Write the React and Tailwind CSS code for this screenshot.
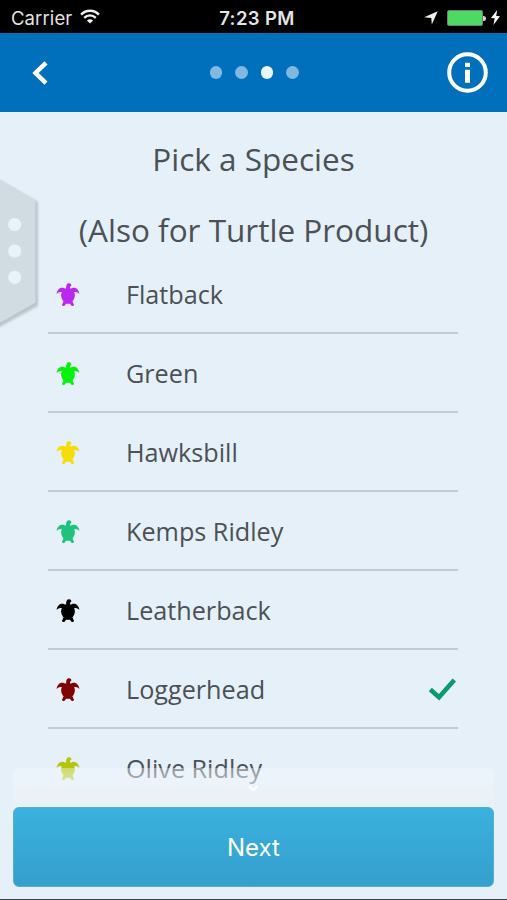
const SPECIES = [
  { name: 'Flatback', color: '#bb29f0' },
  { name: 'Green', color: '#05f20a' },
  { name: 'Hawksbill', color: '#f6dc08' },
  { name: 'Kemps Ridley', color: '#20c27a' },
  { name: 'Leatherback', color: '#000000' },
  { name: 'Loggerhead', color: '#800303', selected: true },
  { name: 'Olive Ridley', color: '#b5c60a' },
];

function Turtle({ color }) {
  return (
    <svg width="24" height="24" viewBox="0 0 24 24" fill={color}>
      <ellipse cx="12" cy="12.600" rx="6.900" ry="7.600" />
      <path d="M10.300 6.500C9.700 3 10.500.6 12.600.3c1.800-.2 3 .8 2.700 2.300-.2.900-1.300.8-1.300 1.700v2.200Z" />
      <path d="M6.500 18.800 9.500 18.500h5l3 .3c-1 .8-.4 1.500.4 2.400.4 1.100-.6 1.900-1.700 1.800-1.300-.1-1.300-1.500-2.200-2.300h-4c-.9.8-.9 2.200-2.200 2.300-1.100.1-2.100-.7-1.700-1.800.8-.9 1.400-1.600.4-2.400Z" />
      <path d="M9.300 8.200C6.200 7 3.500 8.300 2 11" fill="none" stroke={color} strokeWidth="0" />
      <path d="M10 6.500C7.500 3.400 1.300 4.300.6 11.100c1.500-1.900 3.500-2.500 6-1.700ZM14 6.500c2.500-3.100 8.700-2.200 9.400 4.600-1.500-1.900-3.500-2.500-6-1.700Z" />
    </svg>
  );
}

function StatusBar() {
  return (
    <div className="relative flex h-[33px] items-center bg-black pl-[11px] pr-[7px] font-['Inter',sans-serif] text-[#e4e4e4]">
      <span className="pt-[3px] text-[18.5px] leading-none tracking-[0.1px]">Carrier</span>
      <svg className="ml-[8px]" width="20" height="15" viewBox="0 0 20 15" fill="none" stroke="#f1f1f1">
        <path d="M1.100 5.600C6.200.5 13.800.5 18.900 5.600" strokeWidth="2.500" />
        <path d="M4.200 8.800c3.400-3.300 8.200-3.300 11.600 0" strokeWidth="2.400" />
        <path d="M10 14.500 6.900 11.500c1.800-1.800 4.400-1.800 6.200 0Z" fill="#f1f1f1" stroke="none" />
      </svg>
      <span className="absolute inset-x-0 top-[8px] pl-[7px] text-center text-[18.5px] font-semibold leading-[20px] tracking-[0.4px]">7:23 PM</span>
      <div className="ml-auto flex items-center">
        <svg className="mt-[3px]" width="14" height="14" viewBox="0 0 14 14" fill="#f1f1f1"><path d="M13.700.3 7.800 13.600 7.300 6.900.2 6.200Z" /></svg>
        <div className="ml-[9px] mt-[3px] h-[16px] w-[36px] rounded-[2px] border border-[#6e7d70] bg-[#4cd964]" />
        <div className="mt-[3px] h-[5px] w-[3px] rounded-r-sm bg-[#d0d2d0]" />
        <svg className="ml-[5px] mt-[2px]" width="9" height="15" viewBox="0 0 9 15" fill="#fff"><path d="M6.200 0 0 8.100l3.700.2L2.400 15 9 6.200l-3.800-.1Z" /></svg>
      </div>
    </div>
  );
}

function Header() {
  return (
    <header className="flex h-[79px] items-center justify-between bg-[#006fbc] pl-[32px] pr-[19px]">
      <svg width="16" height="24" viewBox="0 0 16 24" fill="none" stroke="#fff" strokeWidth="4.500">
        <path d="M14 1.800 3.500 12 14 22.200" />
      </svg>
      <div className="ml-[13px] flex gap-[13px]">
        <i className="size-[12.500px] rounded-full bg-[#80b8df]" />
        <i className="size-[12.500px] rounded-full bg-[#80b8df]" />
        <i className="size-[12.500px] rounded-full bg-[#e9f4fb]" />
        <i className="size-[12.500px] rounded-full bg-[#80b8df]" />
      </div>
      <svg width="41" height="41" viewBox="0 0 41 41" fill="none">
        <circle cx="20.500" cy="20.500" r="18.300" stroke="#fff" strokeWidth="4" />
        <path d="M18 10.700h5v4.200h-5ZM18 17.800h5v13h-5Z" fill="#fff" />
      </svg>
    </header>
  );
}

function SideHandle() {
  return (
    <svg className="absolute left-0 top-[178px]" width="44" height="154" viewBox="0 0 44 154">
      <path d="M-4 0 38 24V128L-4 151Z" fill="#bac5cb" style={{ filter: 'blur(1.2px)' }} />
      <path d="M-4 0 35.500 22.500V124.500L-4 147Z" fill="#d1dbe2" />
      <circle cx="14.700" cy="46.500" r="6.600" fill="#e7f2fb" />
      <circle cx="14.700" cy="73" r="6.600" fill="#e7f2fb" />
      <circle cx="14.700" cy="99.300" r="6.600" fill="#e7f2fb" />
    </svg>
  );
}

export default function App() {
  return (
    <div className="relative flex h-[900px] w-[507px] flex-col overflow-hidden bg-[#e6f0f9] font-['Open_Sans',sans-serif] text-[#4b5154]">
      <StatusBar />
      <Header />
      <main className="min-h-0 flex-1 overflow-hidden pt-[11px]">
        <div className="text-center text-[31.500px] leading-[71px]">
          <h1 className="h-[71px]">Pick a Species</h1>
          <h2 className="h-[61px]">(Also for Turtle Product)</h2>
        </div>
        <ul className="ml-[48px] w-[410px]">
          {SPECIES.map((s) => (
            <li key={s.name} className="flex h-[79px] items-center border-b-2 border-[#c3ccd1] pl-[8px] pr-[1px] pt-[2px]">
              <Turtle color={s.color} />
              <span className="ml-[46px] text-[25.200px]">{s.name}</span>
              {s.selected && (
                <svg className="ml-auto" width="29" height="24" viewBox="0 0 29 24" fill="none" stroke="#0b9970" strokeWidth="4.600">
                  <path d="M2.300 11.500 11 19.300 26.300 2" />
                </svg>
              )}
            </li>
          ))}
        </ul>
      </main>
      <SideHandle />
      <footer className="absolute inset-x-[13px] bottom-0 flex h-[132px] flex-col">
        <div className="flex h-[39px] justify-center rounded-t-[5px] bg-gradient-to-b from-[#f6faff]/40 via-[#f0f6fb]/60 via-40% to-[#e8f1f6] pt-[17px]">
          <svg width="12" height="8" viewBox="0 0 12 8" fill="none" stroke="#fff" strokeWidth="2"><path d="m1 1 4.300 4.300L9.600 1" /></svg>
        </div>
        <button className="h-[80px] rounded-[6px] border border-[#55adcf] bg-gradient-to-b from-[#3ab1de] to-[#359fcd] pt-[1px] font-['Inter',sans-serif] text-[24px] text-white">Next</button>
      </footer>
      <div className="absolute inset-x-0 bottom-0 h-px bg-[#3d434a]" />
    </div>
  );
}
